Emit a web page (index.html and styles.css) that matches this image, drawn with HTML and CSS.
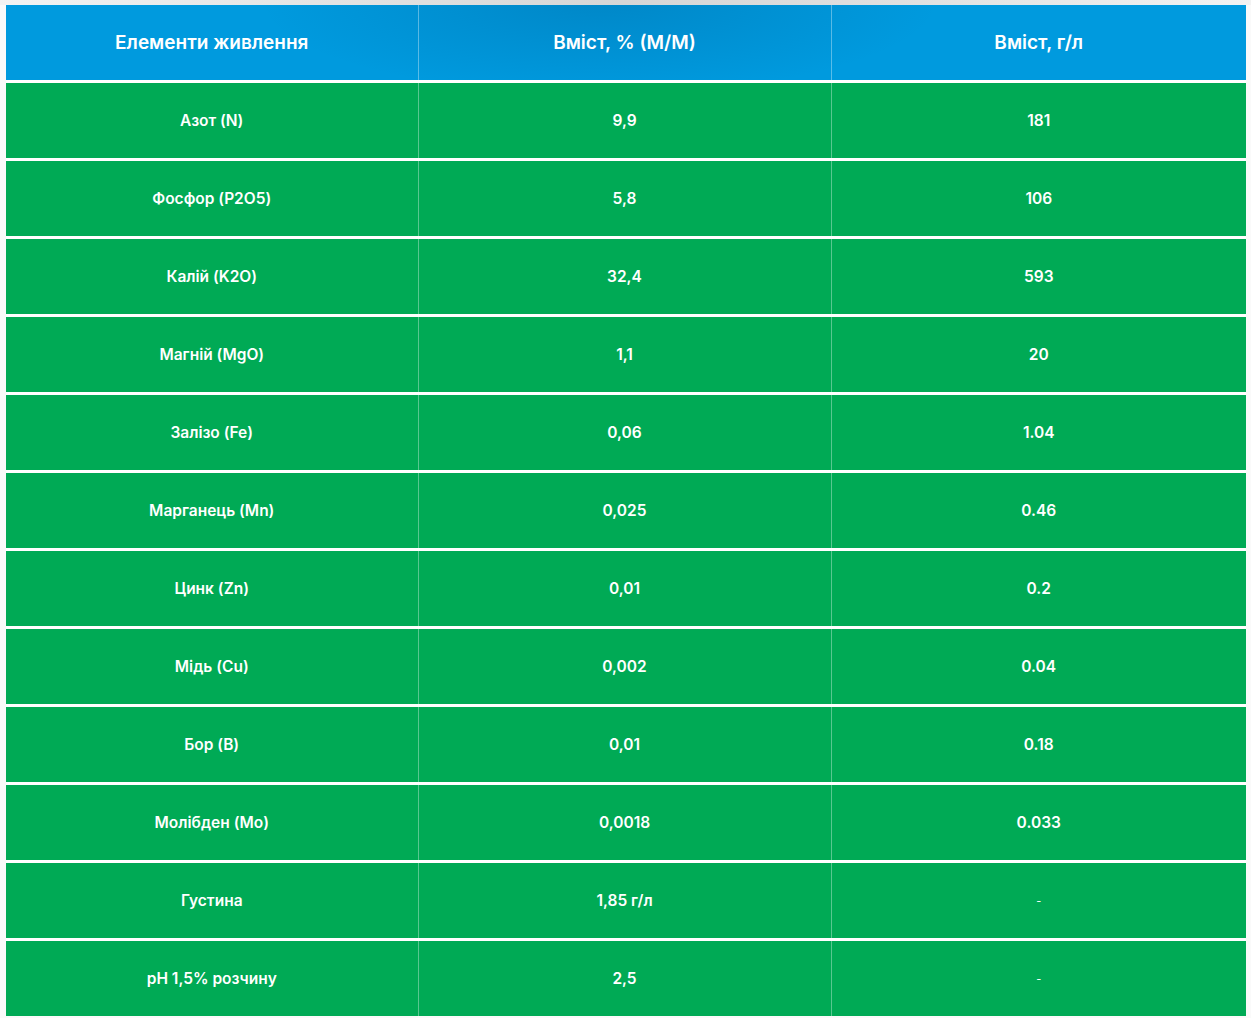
FILE: index.html
```html
<!DOCTYPE html>
<html lang="uk">
<head>
<meta charset="utf-8">
<title>Елементи живлення</title>
<link rel="stylesheet" href="styles.css">
</head>
<body>
<div class="shade"></div>
<div class="wrap">
<table class="nutri">
  <colgroup>
    <col class="c1"><col class="c2"><col class="c3">
  </colgroup>
  <thead>
    <tr><th>Елементи живлення</th><th>Вміст, % (М/М)</th><th>Вміст, г/л</th></tr>
  </thead>
  <tbody>
    <tr><td>Азот (N)</td><td>9,9</td><td>181</td></tr>
    <tr><td>Фосфор (P2O5)</td><td>5,8</td><td>106</td></tr>
    <tr><td>Калій (K2O)</td><td>32,4</td><td>593</td></tr>
    <tr><td>Магній (MgO)</td><td>1,1</td><td>20</td></tr>
    <tr><td>Залізо (Fe)</td><td>0,06</td><td>1.04</td></tr>
    <tr><td>Марганець (Mn)</td><td>0,025</td><td>0.46</td></tr>
    <tr><td>Цинк (Zn)</td><td>0,01</td><td>0.2</td></tr>
    <tr><td>Мідь (Cu)</td><td>0,002</td><td>0.04</td></tr>
    <tr><td>Бор (B)</td><td>0,01</td><td>0.18</td></tr>
    <tr><td>Молібден (Mo)</td><td>0,0018</td><td>0.033</td></tr>
    <tr><td>Густина</td><td>1,85 г/л</td><td class="dash">-</td></tr>
    <tr><td>pH 1,5% розчину</td><td>2,5</td><td class="dash">-</td></tr>
  </tbody>
</table>
</div>
</body>
</html>
```
FILE: styles.css
```css
html, body {
  margin: 0;
  padding: 0;
  background: #fafafa;
}
body {
  font-family: Inter, "Noto Sans", sans-serif;
  color: #fff;
}
.shade {
  height: 5px;
  background: linear-gradient(90deg, #f3f3f3 0%, #e4e4e4 25%, #d6d6d6 50%, #e0e0e0 72%, #f3f3f3 100%);
}
.wrap {
  padding: 0 5px 0 6px;
}
.nutri {
  width: 1240px;
  border-collapse: collapse;
  table-layout: fixed;
}
.nutri .c1 { width: 412px; }
.nutri .c2 { width: 413px; }
.nutri .c3 { width: 415px; }
.nutri th,
.nutri td {
  text-align: center;
  vertical-align: middle;
  padding: 0;
  border-bottom: 3px solid #fff;
}
.nutri th + th,
.nutri td + td {
  border-left: 1px solid rgba(255, 255, 255, 0.35);
}
.nutri th {
  height: 75px;
  font-size: 19px;
  font-weight: 600;
  background-color: #009ade;
  background-image: radial-gradient(ellipse 340px 95px at 600px 0px, rgba(0, 60, 110, 0.2), rgba(0, 60, 110, 0) 100%);
  background-attachment: fixed;
  letter-spacing: 0;
}
.nutri td {
  height: 75px;
  font-size: 15.5px;
  font-weight: 600;
  background: #00aa55;
  letter-spacing: 0;
}
.nutri tbody tr:last-child td {
  border-bottom: 0;
}
.nutri td.dash {
  font-size: 11px;
  font-weight: 400;
}
```
